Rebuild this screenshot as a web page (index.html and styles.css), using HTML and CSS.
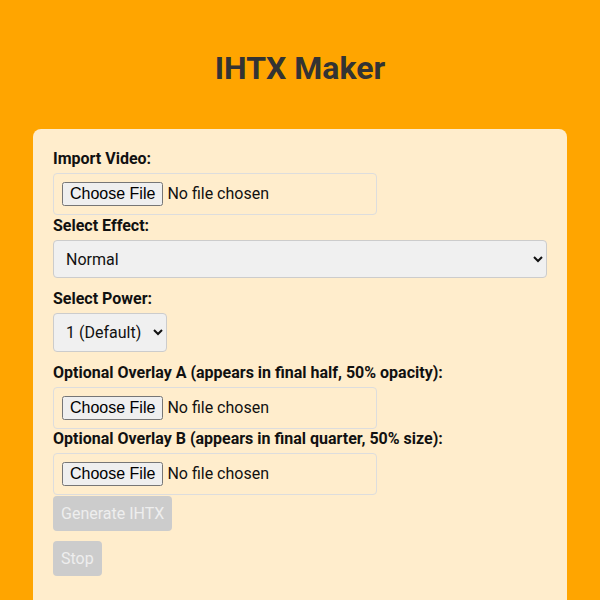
FILE: index.html
```html
<!DOCTYPE html>
<html>
<head>
<meta charset="utf-8">
<link rel="stylesheet" href="styles.css">
</head>
<body>
<h1 class="title">IHTX Maker</h1>
<div class="card">
  <label class="lbl" for="video">Import Video:</label>
  <input class="file file-first" type="file" id="video">
  <label class="lbl" for="effect">Select Effect:</label>
  <select class="sel sel-wide" id="effect"><option>Normal</option></select>
  <label class="lbl" for="power">Select Power:</label>
  <select class="sel" id="power"><option>1 (Default)</option></select>
  <label class="lbl" for="ova">Optional Overlay A (appears in final half, 50% opacity):</label>
  <input class="file" type="file" id="ova">
  <label class="lbl" for="ovb">Optional Overlay B (appears in final quarter, 50% size):</label>
  <input class="file" type="file" id="ovb">
  <button class="btn btn-gen" disabled>Generate IHTX</button>
  <button class="btn" disabled>Stop</button>
</div>
</body>
</html>
```
FILE: styles.css
```css
html, body { margin: 0; padding: 0; }
body {
  background: #ffa500;
  font-family: Roboto, "Liberation Sans", sans-serif;
  color: #111;
  padding: 0 33px;
  height: 600px;
  overflow: hidden;
}
.title {
  margin: 0;
  padding-top: 49px;
  height: 129px;
  box-sizing: border-box;
  text-align: center;
  font-size: 32px;
  font-weight: 700;
  color: #333;
  line-height: 38px;
}
.card {
  background: #ffedcc;
  border-radius: 8px 8px 0 0;
  padding: 20px;
  height: 471px;
  box-sizing: border-box;
  display: flex;
  flex-direction: column;
  align-items: flex-start;
}
.lbl {
  display: block;
  font-size: 16px;
  font-weight: 700;
  line-height: 19px;
  margin-bottom: 5px;
}
.file {
  font-family: Roboto, "Liberation Sans", sans-serif;
  font-size: 16px;
  width: 324px;
  box-sizing: border-box;
  padding: 8px;
  border: 1px solid #ddd;
  border-radius: 4px;
  color: #111;
  flex-shrink: 0;
}
.file-first { margin-bottom: 1px; }
.sel {
  font-family: Roboto, "Liberation Sans", sans-serif;
  font-size: 16px;
  padding: 8px;
  border: 1px solid #ccc;
  border-radius: 4px;
  background: #f0f0f0;
  color: #111;
  margin-bottom: 11px;
  flex-shrink: 0;
}
.sel-wide { align-self: stretch; height: 38px; }
.btn {
  font-family: Roboto, "Liberation Sans", sans-serif;
  font-size: 16px;
  padding: 8px;
  border: none;
  border-radius: 4px;
  background: #cccccc;
  color: #eeeeee;
  margin-bottom: 10px;
  line-height: 19px;
  flex-shrink: 0;
}
.btn-gen { margin-top: 1px; }
```
